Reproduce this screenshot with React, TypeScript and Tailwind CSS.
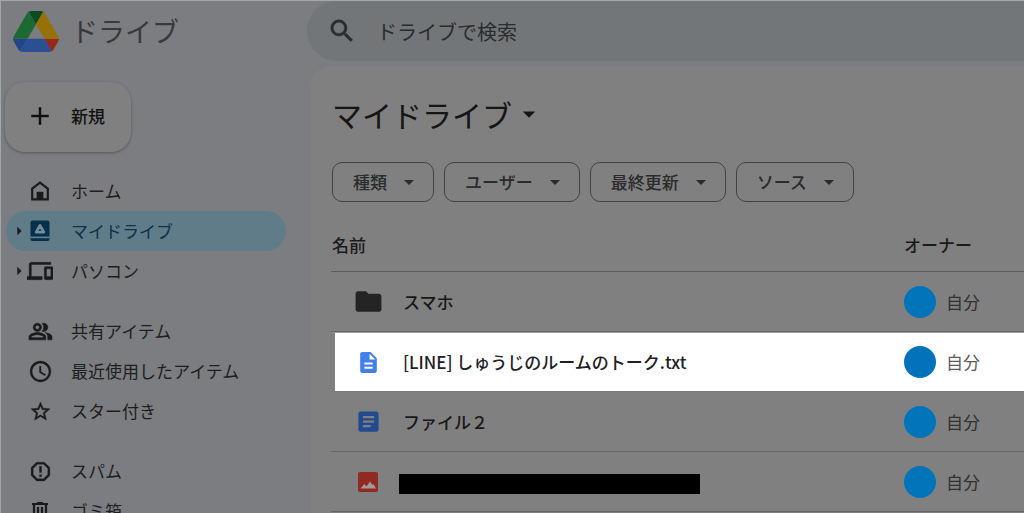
import type { ReactNode } from "react";
import {
  MdAdd,
  MdArrowDropDown,
  MdArrowRight,
  MdArticle,
  MdDescription,
  MdFolder,
  MdOutlineAccessTime,
  MdOutlineDevices,
  MdOutlinePeopleAlt,
  MdReportGmailerrorred,
  MdSearch,
  MdStarBorder,
} from "react-icons/md";

interface NavItem {
  label: string;
  icon: ReactNode;
  expandable?: boolean;
  active?: boolean;
}

interface FileRow {
  name: string;
  icon: ReactNode;
  owner: string;
  highlighted?: boolean;
  redacted?: boolean;
}

// Thickens the glyph only, the icon's empty bounding path stays invisible
const boldIcon = "shrink-0 [&_[fill=none]]:stroke-0";

function DriveLogo() {
  return (
    <svg className="h-[41px] w-[46px] shrink-0" viewBox="0 0 87.3 78" aria-hidden="true">
      <path fill="#23468a" d="m6.6 66.85 3.85 6.65c.8 1.4 1.95 2.5 3.3 3.3l13.75-23.8h-27.5c0 1.55.4 3.1 1.2 4.5z" />
      <path fill="#1c6a32" d="m43.65 25-13.75-23.8c-1.35.8-2.5 1.9-3.3 3.3l-25.4 44a9.06 9.06 0 0 0-1.2 4.5h27.5z" />
      <path fill="#96291f" d="m73.55 76.8c1.35-.8 2.5-1.9 3.3-3.3l1.6-2.75 7.65-13.25c.8-1.4 1.2-2.95 1.2-4.5h-27.5l5.85 11.5z" />
      <path fill="#0e4a20" d="m43.65 25 13.75-23.8c-1.35-.8-2.9-1.2-4.5-1.2h-18.5c-1.6 0-3.15.45-4.5 1.2z" />
      <path fill="#2a4f92" d="m59.8 53h-32.3l-13.75 23.8c1.35.8 2.9 1.2 4.5 1.2h50.8c1.6 0 3.15-.45 4.5-1.2z" />
      <path fill="#957108" d="m73.4 26.5-12.7-22c-.8-1.4-1.95-2.5-3.3-3.3l-13.75 23.8 16.15 28h27.45c0-1.55-.4-3.1-1.2-4.5z" />
    </svg>
  );
}

function HomeIcon() {
  return (
    <svg className="h-6 w-6" viewBox="0 0 24 24" fill="none" aria-hidden="true">
      <path d="M4.2 20.4V9.6L12 3.6l7.8 6v10.8z" stroke="currentColor" strokeWidth="2.2" />
      <path d="M8.6 12.8h6.8V20H8.6z" fill="currentColor" />
    </svg>
  );
}

function MyDriveIcon() {
  return (
    <svg className="h-6 w-6" viewBox="0 0 24 24" aria-hidden="true">
      <path
        fill="currentColor"
        d="M4.5 1.5h15a2 2 0 0 1 2 2v14h-19v-14a2 2 0 0 1 2-2zM2.5 19.2h19v.8a2 2 0 0 1-2 2h-15a2 2 0 0 1-2-2z"
      />
      <path fill="currentColor" stroke="#6f8d9b" strokeWidth="2.8" strokeLinejoin="round" d="M12 6.4l-3.900 6.700h7.800z" />
    </svg>
  );
}

function TrashIcon() {
  return (
    <svg className="h-6 w-6" viewBox="0 0 24 24" fill="none" stroke="currentColor" strokeWidth="2.2" aria-hidden="true">
      <path d="M4 5h16M9 4h6M6 5v15h12V5M10 8v9M14 8v9" />
    </svg>
  );
}

function ImageFileIcon() {
  return (
    <svg className="h-7 w-7" viewBox="0 0 28 28" aria-hidden="true">
      <rect x="4" y="4" width="20" height="20" rx="2" fill="#902b24" />
      <path fill="#a69a99" d="M6.5 20.5l4-4.5 2 2.5 3.5-5 2.5 3.5 1-1 2.5 4.5z" />
    </svg>
  );
}

const navGroups: NavItem[][] = [
  [
    { label: "ホーム", icon: <HomeIcon /> },
    { label: "マイドライブ", icon: <MyDriveIcon />, expandable: true, active: true },
    { label: "パソコン", icon: <MdOutlineDevices size={26} strokeWidth={0.4} className={boldIcon} />, expandable: true },
  ],
  [
    { label: "共有アイテム", icon: <MdOutlinePeopleAlt size={25} strokeWidth={0.6} className={boldIcon} /> },
    { label: "最近使用したアイテム", icon: <MdOutlineAccessTime size={25} strokeWidth={0.3} className={boldIcon} /> },
    { label: "スター付き", icon: <MdStarBorder size={23} strokeWidth={0.4} className={boldIcon} /> },
  ],
  [
    { label: "スパム", icon: <MdReportGmailerrorred size={25} strokeWidth={0.3} className={boldIcon} /> },
    { label: "ゴミ箱", icon: <TrashIcon /> },
  ],
];

const filters = ["種類", "ユーザー", "最終更新", "ソース"];

const files: FileRow[] = [
  { name: "スマホ", icon: <MdFolder size={31} className="text-[#232425]" />, owner: "自分" },
  {
    name: "[LINE] しゅうじのルームのトーク.txt",
    icon: <MdDescription size={25} className="text-[#4280ea]" />,
    owner: "自分",
    highlighted: true,
  },
  { name: "ファイル２", icon: <MdArticle size={27} className="text-[#234a8e]" />, owner: "自分" },
  { name: "", icon: <ImageFileIcon />, owner: "自分", redacted: true },
];

function NavRow({ item }: { item: NavItem }) {
  return (
    <li>
      <a
        href="#"
        className={`flex h-10 items-center rounded-full ${
          item.active ? "bg-[#607c89] text-[#0e3049]" : "text-[#1d1e1f]"
        }`}
      >
        <span className="flex w-5 shrink-0 justify-center text-[#191b1d]">
          {item.expandable && <MdArrowRight size={20} className="ml-1.5 shrink-0" />}
        </span>
        <span className={`flex w-7 shrink-0 justify-center ${item.active ? "text-[#063049]" : "text-[#191a1b]"}`}>
          {item.icon}
        </span>
        <span className="ml-[17px]">{item.label}</span>
      </a>
    </li>
  );
}

function FileTableRow({ file }: { file: FileRow }) {
  const cell = file.highlighted
    ? "bg-white border-t border-t-[#9c9c9c] border-b border-b-[#777777]"
    : "border-b border-[#656565]";

  return (
    <tr className="h-[60px]">
      <td className={`p-0 ${cell} ${file.highlighted ? "border-l-4 border-l-[#808080]" : "pl-1"}`}>
        <div className="flex items-center">
          <span className="ml-[17px] flex w-8 shrink-0 justify-center">{file.icon}</span>
          {file.redacted ? (
            <span className="mt-1 ml-[15px] h-5 w-[301px] bg-black" />
          ) : (
            <span className={`ml-[19px] font-medium ${file.highlighted ? "text-[#202124]" : "text-[#181818]"}`}>
              {file.name}
            </span>
          )}
        </div>
      </td>
      <td className={`p-0 ${cell}`}>
        <div className="flex items-center gap-[10px]">
          <span className={`h-8 w-8 rounded-full ${file.highlighted ? "bg-[#0272ba]" : "bg-[#0274ba]"}`} />
          <span className={file.highlighted ? "text-[#5a5c5f]" : "text-[#303132]"}>{file.owner}</span>
        </div>
      </td>
    </tr>
  );
}

export default function App() {
  return (
    <div className="flex h-screen flex-col overflow-hidden border-t border-l border-[#a3a7aa] bg-[#7c7d80] font-['Noto_Sans_CJK_JP',sans-serif] text-[17px] leading-6 text-[#1b1b1c]">
      {/* Header */}
      <header className="flex h-[60px] shrink-0">
        <a href="#" className="flex w-[306px] shrink-0 items-center gap-3 pl-3 text-[27px] text-[#38393b]">
          <DriveLogo />
          <span>ドライブ</span>
        </a>
        <form className="flex flex-1 items-center rounded-l-full bg-[#737679] pl-5">
          <MdSearch size={30} strokeWidth={0.4} className={`${boldIcon} text-[#2a2b2d]`} />
          <input
            type="search"
            aria-label="ドライブで検索"
            placeholder="ドライブで検索"
            className="ml-5 h-10 min-w-0 flex-1 bg-transparent text-[20px] outline-none placeholder:text-[#2a2b2d]"
          />
        </form>
      </header>

      <div className="flex min-h-0 flex-1">
        {/* Sidebar */}
        <aside className="w-[310px] shrink-0 pt-[21px] pl-1">
          <button
            type="button"
            className="flex h-[70px] w-[126px] items-center gap-4 rounded-[20px] bg-[#808080] pb-0.5 pl-5 font-medium text-[#111111] shadow-[0_1px_3px_0_#55565a]"
          >
            <MdAdd size={30} className="shrink-0" />
            <span>新規</span>
          </button>
          <nav className="mt-[19px] mr-[25px] ml-px flex flex-col gap-5">
            {navGroups.map((group) => (
              <ul key={group[0].label}>
                {group.map((item) => (
                  <NavRow key={item.label} item={item} />
                ))}
              </ul>
            ))}
          </nav>
        </aside>

        {/* File list */}
        <main className="mt-[5px] min-w-0 flex-1 rounded-tl-[20px] bg-[#808080] pl-5">
          <h1 className="flex h-24 items-center">
            <button type="button" className="flex items-center pl-px text-[30px] leading-10 text-[#151515]">
              マイドライブ
              <MdArrowDropDown size={30} className="ml-0.5 shrink-0" />
            </button>
          </h1>
          <div className="flex gap-[10px] pl-px">
            {filters.map((label) => (
              <button
                key={label}
                type="button"
                className="flex h-10 items-center gap-[10px] rounded-[10px] border border-[#424344] pr-3 pl-5 font-medium text-[#2a2b2c]"
              >
                {label}
                <MdArrowDropDown size={24} className="shrink-0" />
              </button>
            ))}
          </div>
          <table className="mt-4 w-full border-separate border-spacing-0">
            <thead>
              <tr className="h-[54px] text-left">
                <th className="border-b border-[#5c5c5c] p-0 pl-px font-medium">名前</th>
                <th className="w-[120px] border-b border-[#5c5c5c] p-0 font-medium">オーナー</th>
              </tr>
            </thead>
            <tbody>
              {files.map((file) => (
                <FileTableRow key={file.name} file={file} />
              ))}
            </tbody>
          </table>
        </main>
      </div>
    </div>
  );
}
